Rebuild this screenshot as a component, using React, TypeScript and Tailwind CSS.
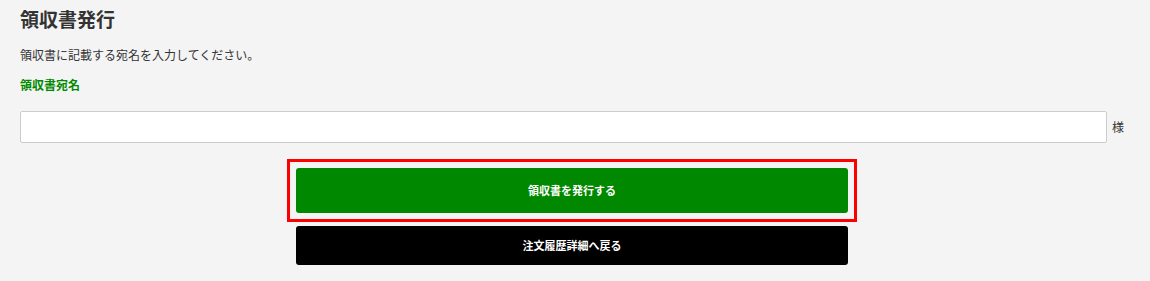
export default function App() {
  return (
    <div
      className="min-h-[281px] w-[1150px] bg-[#f4f4f4] pl-[20px] pr-[26px] pt-[4px] text-[#333]"
      style={{ fontFamily: '"Noto Sans CJK JP", "Noto Sans", sans-serif' }}
    >
      <h1 className="text-[19px] font-bold leading-[30px]">領収書発行</h1>
      <p className="mt-[12px] text-[12px] leading-[18px]">領収書に記載する宛名を入力してください。</p>
      <p className="mt-[12px] text-[12px] font-bold leading-[18px] text-[#008a00]">領収書宛名</p>

      <div className="mt-[17px] flex items-center">
        <input
          type="text"
          className="h-[32px] flex-1 rounded-[2px] border border-[#cccccc] bg-white px-2 text-[12px] outline-none"
        />
        <span className="ml-[5px] text-[12px] text-[#333]">様</span>
      </div>

      <div className="mt-[16px] flex flex-col items-center">
        <div className="border-[3px] border-[#ff0000] p-[6px]">
          <button className="flex h-[45px] w-[552px] items-center justify-center rounded-[3px] bg-[#008800] text-[11px] font-bold text-white">
            領収書を発行する
          </button>
        </div>
        <button className="mt-[4px] flex h-[39px] w-[552px] items-center justify-center rounded-[3px] bg-black text-[11px] font-bold text-white">
          注文履歴詳細へ戻る
        </button>
      </div>
    </div>
  )
}
